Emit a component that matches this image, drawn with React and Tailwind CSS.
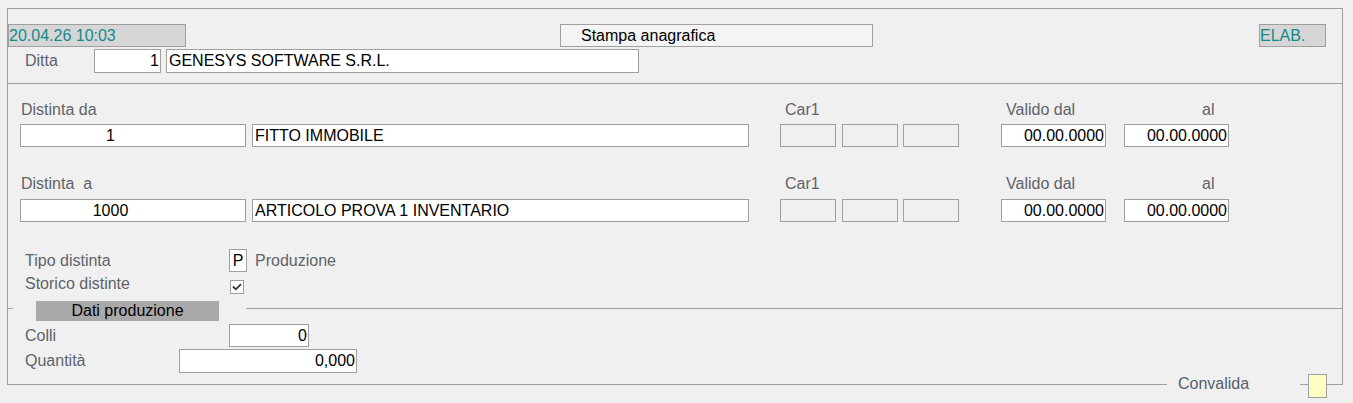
import React from "react";

const box = "h-[23px] border border-[#a0a0a0] bg-white leading-[21px] text-black whitespace-nowrap overflow-hidden";
const label = "leading-[20px] text-[#5f636b] whitespace-pre";

function DistintaRow({ title, code, descr, gap }) {
  return (
    <>
      {/* labels */}
      <div className="flex">
        <span className={`${label} ml-[13px] w-[764px]`}>{title}</span>
        <span className={`${label} w-[221px]`}>Car1</span>
        <span className={`${label} w-[196px]`}>Valido dal</span>
        <span className={label}>al</span>
      </div>
      {/* fields */}
      <div className={`flex ${gap}`}>
        <div className={`${box} ml-[12px] w-[226px] text-center pr-[45px]`}>{code}</div>
        <div className={`${box} ml-[6px] w-[497px] pl-[2px]`}>{descr}</div>
        <div className="h-[23px] w-[56px] ml-[31px] border border-[#a0a0a0]" />
        <div className="h-[23px] w-[56px] ml-[6px] border border-[#a0a0a0]" />
        <div className="h-[23px] w-[56px] ml-[5px] border border-[#a0a0a0]" />
        <div className={`${box} ml-[42px] w-[105px] text-right pr-[1px]`}>00.00.0000</div>
        <div className={`${box} ml-[18px] w-[105px] text-right pr-[1px]`}>00.00.0000</div>
      </div>
    </>
  );
}

export default function App() {
  return (
    <div className="w-[1353px] h-[403px] bg-[#f0f0f0] pt-[8px] pl-[7px] font-['Liberation_Sans',Arial,sans-serif] text-[16px] overflow-hidden">
      {/* Main frame */}
      <div className="w-[1336px] h-[376px] border-x border-t border-[#a0a0a0]">
        {/* Header */}
        <div className="h-[75px] border-b border-[#a0a0a0] pt-[15px]">
          <div className="flex">
            <div className="h-[23px] w-[178px] border border-[#a0a0a0] bg-[#d6d6d6] text-[#128a8a] leading-[21px]">
              20.04.26 10:03
            </div>
            <div className="h-[23px] w-[313px] ml-[374px] border border-[#a0a0a0] bg-[#f4f4f4] text-black leading-[21px] pl-[20px]">
              Stampa anagrafica
            </div>
            <div className="h-[23px] w-[67px] ml-[386px] border border-[#a0a0a0] bg-[#d6d6d6] text-[#128a8a] leading-[21px]">
              ELAB.
            </div>
          </div>
          <div className="flex items-center mt-[2px]">
            <span className={`${label} ml-[17px] w-[69px]`}>Ditta</span>
            <div className={`${box} h-[24px] w-[67px] text-right pr-[1px]`}>1</div>
            <div className={`${box} h-[24px] w-[473px] ml-[5px] pl-[2px]`}>GENESYS SOFTWARE S.R.L.</div>
          </div>
        </div>

        {/* Distinta range */}
        <div className="pt-[16px]">
          <DistintaRow title="Distinta da" code="1" descr="FITTO IMMOBILE" gap="mt-[4px]" />
        </div>
        <div className="mt-[27px]">
          <DistintaRow title="Distinta  a" code="1000" descr="ARTICOLO PROVA 1 INVENTARIO" gap="mt-[5px]" />
        </div>

        {/* Tipo / storico */}
        <div className="flex items-center mt-[27px] h-[23px]">
          <span className={`${label} ml-[17px] w-[204px]`}>Tipo distinta</span>
          <div className={`${box} w-[18px] text-center`}>P</div>
          <span className={`${label} ml-[8px]`}>Produzione</span>
        </div>
        <div className="flex items-start mt-[2px] h-[20px]">
          <span className={`${label} ml-[17px] w-[205px]`}>Storico distinte</span>
          <div className="mt-[6px] w-[14px] h-[14px] border border-[#a0a0a0] bg-white flex items-center justify-center">
            <svg width="10" height="8" viewBox="0 0 10 8">
              <path d="M1 3.5 L3.8 6.3 L9 1.2" fill="none" stroke="#333" strokeWidth="1.8" />
            </svg>
          </div>
        </div>

        {/* Dati produzione */}
        <div className="flex items-start mt-[7px] h-[20px]">
          <div className="mt-[7px] w-[5px] h-px bg-[#a0a0a0]" />
          <div className="ml-[23px] w-[183px] h-[20px] bg-[#a9a9a9] text-black text-center leading-[20px]">
            Dati produzione
          </div>
          <div className="mt-[7px] ml-[27px] flex-1 h-px bg-[#a0a0a0]" />
        </div>
        <div className="flex items-center mt-[3px]">
          <span className={`${label} ml-[17px] w-[204px]`}>Colli</span>
          <div className={`${box} w-[80px] text-right pr-[1px]`}>0</div>
        </div>
        <div className="flex items-center mt-[2px]">
          <span className={`${label} ml-[17px] w-[154px]`}>Quantità</span>
          <div className={`${box} h-[24px] w-[178px] text-right pr-[1px]`}>0,000</div>
        </div>
      </div>

      {/* Bottom edge with Convalida */}
      <div className="flex items-start -mt-[10px] h-[24px]">
        <div className="mt-[10px] w-[1160px] h-px bg-[#a0a0a0]" />
        <span className="w-[133px] pl-[11px] leading-[20px] text-[#56606e]">Convalida</span>
        <div className="mt-[10px] w-[8px] h-px bg-[#a0a0a0]" />
        <div className="w-[19px] h-[24px] border border-[#a0a0a0] bg-[#ffffc4]" />
        <div className="mt-[10px] w-[16px] h-px bg-[#a0a0a0]" />
      </div>
    </div>
  );
}
